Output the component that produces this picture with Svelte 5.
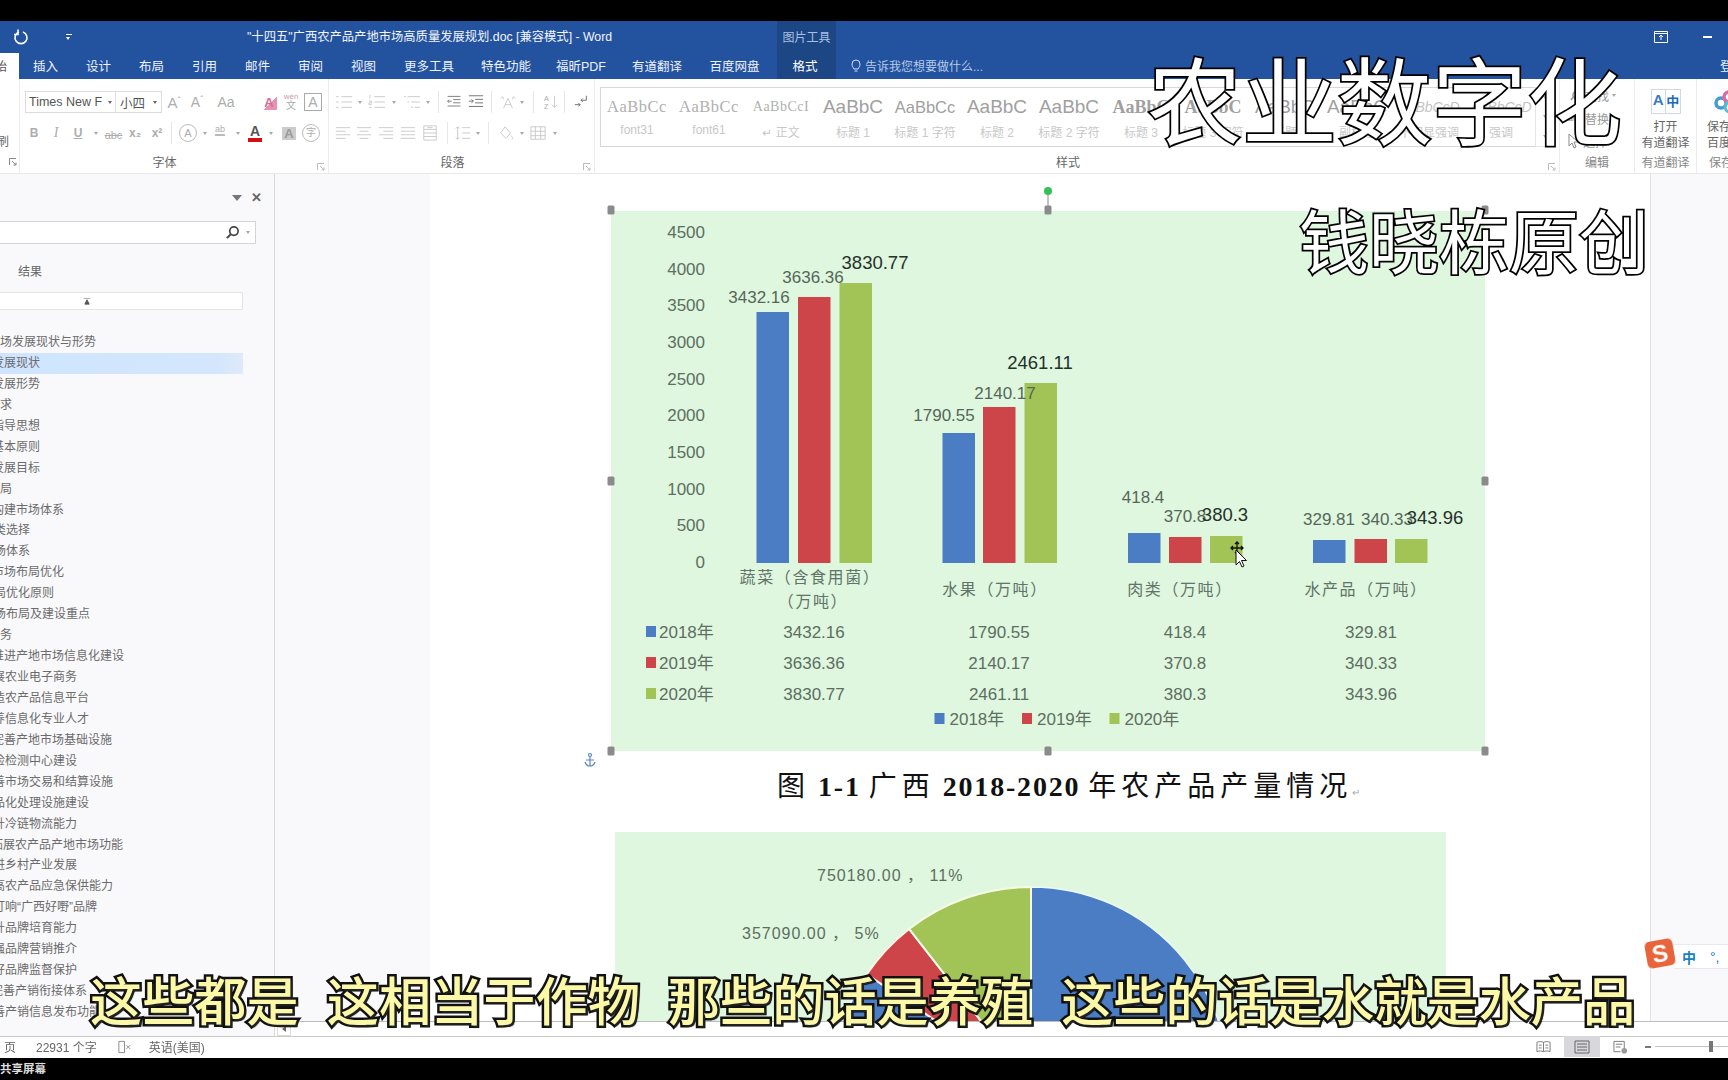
<script>
  const T = (t, w, c = '') => ({ k: 'txt', t, w, c });
  const I = (i, w, c = '') => ({ k: 'ic', i, w, c });
  const D = (w) => ({ k: 'dd', w });
  const S = (w) => ({ k: 'sep', w });
  const G = (w) => ({ k: 'gap', w });

  const ICONS = {
    bullets: 'M1 3h3M1 9h3M1 15h3M7 3h12M7 9h12M7 15h12',
    numbers: 'M2 1v4M1 8h3v2H1v2h3M1 15h3M7 3h12M7 9h12M7 15h12',
    multi: 'M1 3h2M5 3h14M5 9h2M9 9h10M9 15h2M13 15h6',
    outdent: 'M2 2h16M9 6h9M9 10h9M2 14h16M7 8H2M4 6L2 8l2 2',
    indent: 'M2 2h16M9 6h9M9 10h9M2 14h16M2 8h5M5 6l2 2-2 2',
    textdir: 'M5 16L10 5l5 11M7 12h6M2 5l2-2 1 3M18 5l-2-2-1 3',
    sort: 'M14 2v13M11 12l3 3 3-3',
    marks: 'M16 2v5H10M12 5L10 7l2 2M3 12h6M7 10l2 2-2 2',
    alignL: 'M2 3h16M2 7h11M2 11h16M2 15h11',
    alignC: 'M2 3h16M5 7h10M2 11h16M5 15h10',
    alignR: 'M2 3h16M7 7h11M2 11h16M7 15h11',
    justify: 'M2 3h16M2 7h16M2 11h16M2 15h16',
    dist: 'M3 1h14v16H3zM3 5h14M3 9h14M3 13h14M7 3h6',
    linesp: 'M4 2v14M2 4l2-2 2 2M2 14l2 2 2-2M9 3h9M9 9h9M9 15h9',
    fill: 'M9 2l6 7-5 6-6-6zM16 12c1 2 2 3 1 4',
    border: 'M2 2h16v14H2zM2 7h16M2 12h16M7 2v14M13 2v14'
  };

  const fontRow1 = [T('A', 24, 'big sup'), T('A', 22, 'mid sup'), T('Aa', 36, 'mid'), G(14), T('A', 22, 'pen'), T('wén', 22, 'wen'), T('A', 22, 'boxed')];
  const fontRow2 = [T('B', 18, 'b'), T('I', 26, 'it'), T('U', 18, 'u'), D(18), T('abc', 17, 'st'), T('x₂', 26, 'b'), T('x²', 18, 'b'), S(10), T('A', 24, 'ring'), D(10), T('ab', 20, 'abp'), D(15), T('A', 20, 'redA'), D(12), T('A', 24, 'shade'), T('字', 20, 'ring small')];
  const paraRow1 = [I('bullets', 22), D(10), I('numbers', 24), D(10), I('multi', 26), D(6), S(15), I('outdent', 16, 'dark'), I('indent', 28, 'dark'), S(2), G(6), I('textdir', 20), D(8), S(14), I('sort', 22), S(4), G(5), I('marks', 20, 'dark')];
  const paraRow2 = [I('alignL', 20), I('alignC', 22), I('alignR', 22), I('justify', 22), I('dist', 22), S(12), I('linesp', 20), D(10), S(10), I('fill', 26), D(6), I('border', 26), D(8)];

  const styles = [
    ['AaBbCc', 'font31', 'serif'], ['AaBbCc', 'font61', 'serif'], ['AaBbCcI', '↵ 正文', 'serif sm'],
    ['AaBbC', '标题 1', 'lg'], ['AaBbCc', '标题 1 字符', 'md'], ['AaBbC', '标题 2', 'lg'], ['AaBbC', '标题 2 字符', 'lg'],
    ['AaBbC', '标题 3', 'bold'], ['AaBbC', '标题 3 字符', 'bold'], ['AaBbC', '标题', 'lg'], ['AaBbC', '副标题', 'lg'],
    ['AaBbCcD', '不明显强调', 'sm it'], ['AaBbCcD', '强调', 'sm it']
  ];

  const tabs = [['插入', 53], ['设计', 53], ['布局', 53], ['引用', 53], ['邮件', 53], ['审阅', 53], ['视图', 53], ['更多工具', 78], ['特色功能', 76], ['福昕PDF', 74], ['有道翻译', 78], ['百度网盘', 77]];

  const outline = [
    ['市场发展现状与形势', 96], ['发展现状', 40, true], ['发展形势', 40], ['要求', 12], ['指导思想', 40], ['基本原则', 40], ['发展目标', 40], ['布局', 12],
    ['构建市场体系', 64], ['品类选择', 30], ['市场体系', 30], ['市场布局优化', 64], ['布局优化原则', 54], ['市场布局及建设重点', 90], ['任务', 12],
    ['推进产地市场信息化建设', 124], ['发展农业电子商务', 77], ['打造农产品信息平台', 89], ['培养信息化专业人才', 89], ['完善产地市场基础设施', 112],
    ['质检检测中心建设', 77], ['完善市场交易和结算设施', 113], ['商品化处理设施建设', 89], ['提升冷链物流能力', 77], ['拓展农产品产地市场功能', 123],
    ['促进乡村产业发展', 77], ['提高农产品应急保供能力', 113], ['打响“广西好嘢”品牌', 97], ['提升品牌培育能力', 77], ['加强品牌营销推介', 77],
    ['做好品牌监督保护', 77], ['完善产销衔接体系', 87], ['完善产销信息发布功能', 101]
  ];

  const C = { a: '#4a7dc4', b: '#cd4548', c: '#a2c355' };
  const base = 563;
  const bars = [
    [756.5, 312, C.a], [798, 297, C.b], [839.5, 283, C.c],
    [942.5, 433, C.a], [983, 407, C.b], [1024.5, 383, C.c],
    [1128, 533, C.a], [1169, 537, C.b], [1210, 536, C.c],
    [1313, 540, C.a], [1354.5, 539, C.b], [1395, 539, C.c]
  ];
  const axis = [4500, 4000, 3500, 3000, 2500, 2000, 1500, 1000, 500, 0];
  const values = [
    ['3432.16', 759, 297], ['3636.36', 813, 277], ['3830.77', 875, 263, true],
    ['1790.55', 944, 415], ['2140.17', 1005, 393], ['2461.11', 1040, 363, true],
    ['418.4', 1143, 497], ['370.8', 1185, 516], ['380.3', 1225, 515, true],
    ['329.81', 1329, 519], ['340.33', 1387, 519], ['343.96', 1435, 518, true]
  ];
  const cats = [['蔬菜（含食用菌）', 810, 577], ['（万吨）', 813, 601], ['水果（万吨）', 995, 589], ['肉类（万吨）', 1180, 589], ['水产品（万吨）', 1366, 589]];
  const table = [
    ['2018年', 632, C.a, ['3432.16', '1790.55', '418.4', '329.81']],
    ['2019年', 663, C.b, ['3636.36', '2140.17', '370.8', '340.33']],
    ['2020年', 694, C.c, ['3830.77', '2461.11', '380.3', '343.96']]
  ];
  const cols = [814, 999, 1185, 1371];
  const legend = [[934.5, '2018年', C.a], [1022, '2019年', C.b], [1109.5, '2020年', C.c]];
  const handles = [[611, 210], [1048, 210], [1485, 210], [611, 481], [1485, 481], [611, 751], [1048, 751], [1485, 751]];

  function wedge(cx, cy, r, a0, a1) {
    const p = (a) => [cx + r * Math.sin((a * Math.PI) / 180), cy - r * Math.cos((a * Math.PI) / 180)];
    const [x0, y0] = p(a0), [x1, y1] = p(a1);
    const large = a1 - a0 > 180 ? 1 : 0;
    return `M${cx} ${cy}L${x0} ${y0}A${r} ${r} 0 ${large} 1 ${x1} ${y1}Z`;
  }
  const sub = ['这些都是', '这相当于作物', '那些的话是养殖', '这些的话是水就是水产品'];
</script>

{#snippet tools(list)}
  {#each list as t}
    <span class="slot" style:width="{t.w}px">
      {#if t.k === 'txt'}
        <span class={'tx ' + t.c}>{t.t}</span>
      {:else if t.k === 'ic'}
        <svg class={'ic ' + t.c} viewBox="0 0 20 18" width="18" height="16">
          <path d={ICONS[t.i]} />
          {#if t.i === 'sort'}
            <text x="2" y="8" class="mini">A</text>
            <text x="2" y="17" class="mini">Z</text>
          {/if}
        </svg>
      {:else if t.k === 'dd'}
        <span class="caret"></span>
      {:else if t.k === 'sep'}
        <span class="vsep"></span>
      {/if}
    </span>
  {/each}
{/snippet}

{#snippet launcher()}
  <svg class="launch" viewBox="0 0 8 8" width="8" height="8"><path d="M0.5 7V0.5H7M3 3l4 4M7 4.5V7H4.5" /></svg>
{/snippet}

<div class="screen">
  <div class="soft">
    <div class="black top"></div>

    <header class="title">
      <div class="qat">
        <svg viewBox="0 0 16 16" width="16" height="17"><path d="M6 2.500a6 6 0 1 0 4 0M5 0v5H1" fill="none" stroke="#fff" stroke-width="1.600" /></svg>
      </div>
      <div class="qat2"><span class="qbar"></span><span class="caret white"></span></div>
      <div class="doc-title">"十四五"广西农产品产地市场高质量发展规划.doc [兼容模式] - Word</div>
      <div class="ctx">图片工具</div>
      <div class="grow"></div>
      <svg class="restore" viewBox="0 0 14 12" width="14" height="12"><path d="M0.500 0.500h13v11H.5zM.5 2.500h13M7 9V4M5 6l2-2 2 2" fill="none" stroke="#fff" /></svg>
      <div class="minimize"></div>
    </header>

    <nav class="tabs">
      <div class="tab-home">始</div>
      {#each tabs as [label, w]}
        <div class="tab" style:width="{w}px">{label}</div>
      {/each}
      <div class="tab ctx-tab">格式</div>
      <svg class="bulb" viewBox="0 0 10 14" width="10" height="14"><path d="M3 10C2 8 1 7.500 1 5a4 4 0 0 1 8 0c0 2.500-1 3-2 5zM3.500 12h3" fill="none" stroke="#cfe0ff" /></svg>
      <div class="tell">告诉我您想要做什么...</div>
      <div class="grow"></div>
      <div class="login">登</div>
    </nav>

    <section class="ribbon">
      <div class="grp clip">
        <div class="clip-txt">刷</div>
        <div class="grp-foot">{@render launcher()}</div>
      </div>
      <div class="grp font">
        <div class="row first">
          <div class="combo">
            <span class="cb-a">Times New F<span class="caret"></span></span>
            <span class="cb-b">小四<span class="caret"></span></span>
          </div>
          {@render tools(fontRow1)}
        </div>
        <div class="row">{@render tools(fontRow2)}</div>
        <div class="grp-label">字体{@render launcher()}</div>
      </div>
      <div class="grp para">
        <div class="row first">{@render tools(paraRow1)}</div>
        <div class="row">{@render tools(paraRow2)}</div>
        <div class="grp-label">段落{@render launcher()}</div>
      </div>
      <div class="grp style">
        <div class="gal-wrap">
          <div class="gallery">
            {#each styles as [sample, name, cls]}
              <div class="st">
                <div class={'st-s ' + cls}>{sample}</div>
                <div class="st-n">{name}</div>
              </div>
            {/each}
          </div>
          <div class="gal-arrows">
            <span class="caret"></span><span class="caret"></span><span class="caret"></span>
          </div>
        </div>
        <div class="grp-label">样式{@render launcher()}</div>
      </div>
      <div class="grp edit">
        <div class="edit-list">
          <div class="e-row">
            <svg viewBox="0 0 14 14" width="14" height="14"><path d="M9 3a4 4 0 1 0 0.010 0M3 12l3-4" fill="none" stroke="#999" stroke-width="1.500" /></svg>
            <span>查找</span><span class="caret"></span>
          </div>
          <div class="e-row"><span class="e-ic">ac</span><span>替换</span></div>
          <div class="e-row">
            <svg viewBox="0 0 12 16" width="12" height="16"><path d="M1 1v12l3-3 2 5 2-1-2-5h4z" fill="#fff" stroke="#888" /></svg>
            <span>选择</span>
          </div>
        </div>
        <div class="grp-label plain">编辑</div>
      </div>
      <div class="grp yd">
        <div class="yd-ic">
          <span class="yd-a">A</span><span class="yd-z">中</span>
        </div>
        <div class="big-l">打开<br />有道翻译</div>
        <div class="grp-label plain">有道翻译</div>
      </div>
      <div class="grp bd">
        <svg class="bd-ic" viewBox="0 0 30 26" width="30" height="26">
          <circle cx="8" cy="15" r="5" fill="none" stroke="#3f9ed8" stroke-width="3.500" />
          <circle cx="16" cy="9" r="5" fill="none" stroke="#e26a9e" stroke-width="3.500" />
          <circle cx="17" cy="19" r="5" fill="none" stroke="#5fb9c9" stroke-width="3" />
        </svg>
        <div class="big-l left">保存<br />百度</div>
        <div class="grp-label plain left">保存</div>
      </div>
    </section>

    <div class="main">
      <aside class="pane">
        <div class="pane-head"><span class="caret dark"></span><span class="close">✕</span></div>
        <div class="search">
          <svg viewBox="0 0 16 16" width="15" height="15"><circle cx="9.500" cy="6.500" r="4.500" fill="none" stroke="#444" stroke-width="1.800" /><path d="M6 10l-4 4" stroke="#444" stroke-width="2.200" /></svg>
          <span class="caret"></span>
        </div>
        <div class="result">结果</div>
        <div class="upbox"><svg viewBox="0 0 8 8" width="8" height="7"><path d="M0 0h8M4 2L1.500 7h5z" stroke="#555" fill="#555" /></svg></div>
        <ul class="outline">
          {#each outline as [text, end, sel]}
            <li class:sel><span style:width="{end}px">{text}</span></li>
          {/each}
        </ul>
      </aside>

      <div class="work">
        <div class="docrow">
          <div class="gutter"></div>
          <div class="page">
            <svg class="chart" viewBox="611 211 874 540" width="874" height="540">
              <rect x="611" y="211" width="874" height="540" fill="#dff7de" />
              {#each axis as v, i}
                <text class="lab" x="705" y={232 + i * 36.67 + 6} text-anchor="end">{v}</text>
              {/each}
              {#each bars as [x, top, fill]}
                <rect {x} y={top} width="32.500" height={base - top} {fill} />
              {/each}
              {#each values as [t, x, y, strong]}
                <text class={strong ? 'val strong' : 'val'} {x} y={y + 6} text-anchor="middle">{t}</text>
              {/each}
              {#each cats as [t, x, y]}
                <text class="cat" {x} y={y + 6} text-anchor="middle">{t}</text>
              {/each}
              {#each table as [name, y, color, vals]}
                <rect x="646" y={y - 6} width="10" height="11" fill={color} />
                <text class="lab" x="659" y={y + 6}>{name}</text>
                {#each vals as v, i}
                  <text class="lab" x={cols[i]} y={y + 6} text-anchor="middle">{v}</text>
                {/each}
              {/each}
              {#each legend as [x, t, color]}
                <rect {x} y="713" width="10" height="11" fill={color} />
                <text class="lab" x={x + 15} y="725">{t}</text>
              {/each}
              <path d="M1048 191V210" stroke="#888" />
              <circle cx="1048" cy="191" r="4" fill="#35c15a" />
              {#each handles as [x, y]}
                <rect x={x - 3.500} y={y - 4.500} width="7" height="9" rx="1.500" fill="#8b8b8b" />
              {/each}
              <g fill="none" stroke="#5b86c0" stroke-width="1.200">
                <circle cx="590" cy="755" r="1.500" />
                <path d="M590 757v9M586 760h8M585 762c1 3 3 4 5 4s4-1 5-4" />
              </g>
              <g transform="translate(1232 546)">
                <path d="M5 -4v12M-1 2h12M3 -2l2-2 2 2M3 6l2 2 2-2M1 0l-2 2 2 2M9 0l2 2-2 2" fill="none" stroke="#111" stroke-width="1.300" />
                <path d="M4 4v15l3.500-3.500 2.500 5.500 2-1-2.500-5.500h5z" fill="#fff" stroke="#111" />
              </g>
            </svg>

            <div class="caption">
              <span class="cj">图</span><span class="lt">1-1</span><span class="cj">广西</span><span class="lt">2018-2020</span><span class="cj">年农产品产量情况</span><span class="ret">↵</span>
            </div>

            <svg class="chart2" viewBox="615 832 831 189" width="831" height="189">
              <rect x="615" y="832" width="831" height="189" fill="#dff7de" />
              <text class="pie" x="817" y="881">750180.00 ， 11%</text>
              <text class="pie" x="742" y="939">357090.00 ， 5%</text>
              <path d={wedge(1031, 1085, 198, 0, 304)} fill="#4a7dc4" stroke="#eef8ff" stroke-width="1.500" />
              <path d={wedge(1031, 1085, 198, 304, 322)} fill="#cd4548" stroke="#fff3ea" stroke-width="2" />
              <path d={wedge(1031, 1085, 198, 322, 360)} fill="#a2c355" stroke="#f8fbe8" stroke-width="2" />
            </svg>
          </div>
          <div class="gutter right"></div>
        </div>
        <div class="hscroll"><span class="sbtn"><span class="tri"></span></span></div>
      </div>
    </div>

    <footer class="status">
      <span class="s-pg">页</span>
      <span class="s-count">22931 个字</span>
      <svg class="s-ic" viewBox="0 0 16 14" width="15" height="14"><path d="M8 1H2v12h6M8 1v12M10 5l4 4M14 5l-4 4" fill="none" stroke="#888" /></svg>
      <span class="s-lang">英语(美国)</span>
      <span class="grow"></span>
      <svg class="v-a" viewBox="0 0 16 14" width="15" height="14"><path d="M8 2C6 1 3 1 1 2v10c2-1 5-1 7 0 2-1 5-1 7 0V2c-2-1-5-1-7 0zM8 2v10M3 5h3M3 8h3M10 5h3M10 8h3" fill="none" stroke="#777" /></svg>
      <span class="v-on"><svg viewBox="0 0 16 14" width="16" height="14"><path d="M1 1h14v12H1zM3 4h10M3 7h10M3 10h10" fill="none" stroke="#666" /></svg></span>
      <svg class="v-c" viewBox="0 0 16 14" width="15" height="14"><path d="M1 1h11v8M1 1v11h7M3 4h7M3 7h5" fill="none" stroke="#777" /><circle cx="12" cy="11" r="3" fill="#999" /></svg>
      <span class="z-minus"></span>
      <span class="z-track"><span class="z-thumb"></span></span>
    </footer>

    <div class="black share">共享屏幕</div>
  </div>

  <div class="wm wm1">农业数字化</div>
  <div class="wm wm2">钱晓栋原创</div>
  <div class="subtitle">
    {#each sub as s}<span>{s}</span>{/each}
  </div>
  <div class="ime">
    <span class="ime-s">S</span>
    <span class="ime-bar"><b>中</b><i>°,</i></span>
  </div>
</div>

<style>
  :global(body) { margin: 0; background: #000; }
  .screen {
    position: relative; width: 1728px; height: 1080px; overflow: hidden;
    font-family: "Liberation Sans", "Noto Sans CJK SC", sans-serif; color: #666;
  }
  .soft { width: 1728px; height: 1080px; display: flex; flex-direction: column; filter: blur(0.35px); }
  .grow { flex: 1; }
  .black { background: #000; }
  .top { height: 21px; flex: none; }

  .title { height: 32px; flex: none; background: #23529e; display: flex; align-items: center; color: #fff; }
  .qat { width: 42px; padding-left: 13px; box-sizing: border-box; display: flex; }
  .qat2 { width: 205px; padding-left: 24px; box-sizing: border-box; display: flex; flex-direction: column; gap: 2px; }
  .qbar { width: 6px; height: 1px; background: #fff; }
  .doc-title { width: 530px; font-size: 12.300px; color: #f2f5fb; white-space: nowrap; padding-bottom: 2px; box-sizing: border-box; }
  .ctx { width: 59px; height: 32px; background: #1d4685; font-size: 12px; color: #a9c0e4; display: flex; align-items: center; justify-content: center; padding-bottom: 2px; box-sizing: border-box; }
  .restore { margin-right: 35px; }
  .minimize { width: 9px; height: 2px; background: #fff; margin-right: 16px; }

  .tabs { height: 26px; flex: none; background: #23529e; display: flex; align-items: center; color: #eef3fb; font-size: 12.500px; }
  .tab-home { width: 19px; height: 26px; background: #fff; color: #555; display: flex; align-items: center; justify-content: flex-end; overflow: hidden; padding: 0 12px 2px 0; box-sizing: border-box; white-space: nowrap; }
  .tab { height: 26px; display: flex; align-items: center; justify-content: center; white-space: nowrap; padding-bottom: 2px; box-sizing: border-box; }
  .ctx-tab { width: 59px; margin-left: 4px; padding-right: 3px; background: #1d4685; color: #fff; }
  .bulb { margin-left: 15px; margin-right: 4px; }
  .tell { font-size: 12px; color: #b6cbe9; padding-bottom: 2px; }
  .login { width: 8px; overflow: hidden; white-space: nowrap; font-size: 12.500px; padding-bottom: 2px; }

  .ribbon { height: 95px; flex: none; background: #fff; border-bottom: 1px solid #e9e9e9; display: flex; box-sizing: border-box; color: #aaa; overflow: hidden; }
  .grp { position: relative; box-sizing: border-box; border-right: 1px solid #ececec; height: 94px; display: flex; flex-direction: column; }
  .clip { width: 20px; padding-top: 53px; align-items: flex-start; }
  .clip-txt { font-size: 12px; color: #666; width: 9px; overflow: hidden; white-space: nowrap; display: flex; justify-content: flex-end; }
  .grp-foot { margin-top: auto; align-self: flex-end; padding-right: 2px; padding-bottom: 3px; }
  .font { width: 309px; padding-left: 5px; }
  .para { width: 266px; padding-left: 4px; }
  .row { display: flex; align-items: center; height: 22px; margin-top: 9px; flex: none; }
  .row.first { margin-top: 12px; }
  .grp-label { margin-top: auto; height: 20px; line-height: 20px; font-size: 12px; color: #666; text-align: center; position: relative; box-sizing: border-box; }
  .font .grp-label { padding-right: 24px; }
  .para .grp-label { padding-right: 22px; }
  .style .grp-label { padding-right: 18px; }
  .launch { position: absolute; right: 3px; bottom: 2px; fill: none; stroke: #bbb; }
  .clip .launch { position: static; stroke: #888; }

  .combo { display: flex; height: 22px; width: 137px; border: 1px solid #dcdcdc; box-sizing: border-box; flex: none; font-size: 12.500px; color: #555; }
  .cb-a { width: 90px; display: flex; align-items: center; justify-content: space-between; padding: 0 3px; box-sizing: border-box; border-right: 1px solid #dcdcdc; white-space: nowrap; overflow: hidden; }
  .cb-b { flex: 1; display: flex; align-items: center; justify-content: space-between; padding: 0 4px 0 4px; box-sizing: border-box; }

  .slot { display: flex; align-items: center; justify-content: center; height: 22px; flex: none; }
  .tx { font-size: 13px; line-height: 1; color: #adadad; white-space: nowrap; display: block; }
  .tx.big { font-size: 15px; }
  .tx.mid { font-size: 14px; }
  .tx.sup::after { content: "ˆ"; font-size: 9px; vertical-align: 5px; }
  .tx.pen { color: #d56d92; font-weight: 700; font-size: 13px; background: linear-gradient(135deg, transparent 55%, #e493b0 55%); padding: 1px 3px; }
  .tx.wen { font-size: 8px; color: #c9a0a0; text-align: center; }
  .tx.wen::after { content: "文"; display: block; font-size: 10px; color: #aaa; }
  .tx.boxed { border: 1px solid #aaa; padding: 1px 3px; font-size: 14px; }
  .tx.b { font-weight: 700; font-size: 12px; }
  .tx.it { font-style: italic; font-family: "Liberation Serif", serif; font-size: 14px; }
  .tx.u { text-decoration: underline; font-weight: 700; font-size: 12px; }
  .tx.st { text-decoration: line-through; font-size: 11px; }
  .tx.ring { border: 1px solid #bbb; border-radius: 50%; width: 16px; height: 16px; text-align: center; line-height: 16px; font-size: 11px; }
  .tx.small { font-size: 10px; }
  .tx.abp { font-size: 9px; transform: translateY(-3px); border-bottom: 2px solid #bbb; }
  .tx.redA { font-size: 14px; font-weight: 700; color: #555; border-bottom: 4px solid #d40f14; padding: 0 2px; line-height: 13px; }
  .tx.shade { background: #ccc; color: #999; padding: 0 2px; font-weight: 700; }
  .ic { fill: none; stroke: #c6c6c6; stroke-width: 1; }
  .ic.dark { stroke: #666; }
  .mini { font-size: 8px; fill: #aaa; stroke: none; }
  .vsep { width: 1px; height: 22px; background: #e7e7e7; display: block; }
  .caret { display: inline-block; width: 0; height: 0; border-left: 2.500px solid transparent; border-right: 2.500px solid transparent; border-top: 3px solid #a8a8a8; flex: none; }
  .caret.white { border-top-color: #fff; }
  .caret.dark { border-left-width: 5px; border-right-width: 5px; border-top: 6px solid #777; }
  .cb-a .caret, .cb-b .caret { border-top-color: #666; }

  .style { width: 965px; }
  .gal-wrap { display: flex; height: 60px; margin: 8px 0 0 5px; flex: none; }
  .gallery { width: 935px; border: 1px solid #d8d8d8; border-right: none; box-sizing: border-box; display: flex; overflow: hidden; }
  .st { width: 72px; flex: none; overflow: hidden; text-align: center; padding-top: 5px; box-sizing: border-box; }
  .st-s { height: 31px; line-height: 28px; font-size: 18px; color: #a0a0a0; white-space: nowrap; overflow: hidden; padding: 0 3px; }
  .st-s.serif { font-family: "Liberation Serif", serif; font-size: 16.500px; letter-spacing: 0.5px; color: #b0b0b0; }
  .st-s.sm { font-size: 14px; }
  .st-s.md { font-size: 16.500px; }
  .st-s.lg { font-size: 19px; }
  .st-s.bold { font-weight: 700; font-family: "Liberation Serif", serif; }
  .st-s.it { color: #c4c4c4; font-style: italic; }
  .st-n { font-size: 12px; color: #c8c8c8; white-space: nowrap; margin-top: -1px; }
  .gal-arrows { width: 20px; border: 1px solid #e4e4e4; box-sizing: border-box; display: flex; flex-direction: column; justify-content: space-around; align-items: center; }

  .edit { width: 75px; padding: 6px 0 0 8px; }
  .edit-list { display: flex; flex-direction: column; gap: 3px; }
  .e-row { height: 20px; display: flex; align-items: center; gap: 3px; font-size: 12px; color: #999; }
  .e-ic { font-size: 9px; color: #888; width: 14px; }
  .grp-label.plain { color: #888; }
  .grp-label.left { text-align: left; width: 100%; padding-left: 12px; white-space: nowrap; }
  .edit .grp-label { margin-left: -8px; }

  .yd { width: 62px; align-items: center; }
  .yd-ic { display: flex; margin-top: 10px; height: 25px; width: 30px; flex: none; border: 1px solid #cfd8e3; box-sizing: border-box; color: #3a7ac8; font-weight: 700; }
  .yd-a { width: 15px; text-align: center; font-size: 15px; line-height: 20px; }
  .yd-z { width: 15px; text-align: center; font-size: 13px; line-height: 24px; border-left: 1px solid #cfd8e3; color: #1e6bb8; }
  .big-l { margin-top: 5px; font-size: 12px; line-height: 16px; color: #666; text-align: center; white-space: nowrap; }
  .big-l.left { text-align: left; padding-left: 10px; }
  .bd { width: 31px; border-right: none; overflow: hidden; }
  .bd-ic { margin: 9px 0 0 16px; flex: none; }

  .main { height: 862px; flex: none; display: flex; background: #fff; }
  .pane { width: 275px; flex: none; box-sizing: border-box; border-right: 1px solid #d9d9d9; background: #f9f9fb; overflow: hidden; display: flex; flex-direction: column; }
  .pane-head { height: 47px; flex: none; display: flex; align-items: center; justify-content: flex-end; gap: 9px; padding-right: 10px; box-sizing: border-box; }
  .close { font-size: 13px; color: #666; font-weight: 700; width: 13px; }
  .search { width: 256px; height: 23px; flex: none; background: #fff; border: 1px solid #d4d4d4; border-left: none; box-sizing: border-box; display: flex; align-items: center; justify-content: flex-end; gap: 6px; padding-right: 5px; }
  .result { height: 22px; margin-top: 17px; flex: none; padding-left: 18px; font-size: 12px; line-height: 22px; color: #666; }
  .upbox { width: 243px; height: 18px; margin-top: 9px; flex: none; background: #fff; border: 1px solid #e4e4e4; border-left: none; box-sizing: border-box; display: flex; align-items: center; justify-content: flex-end; padding-right: 151px; }
  .outline { list-style: none; margin: 22px 0 0; padding: 0; width: 243px; }
  .outline li { height: 20.940px; line-height: 20.940px; font-size: 12px; color: #6b6b6b; white-space: nowrap; }
  .outline li.sel { background: linear-gradient(90deg, #cfe5ff, #d3e6fd 90%, #dfeafa); }
  .outline li span { display: flex; justify-content: flex-end; }

  .work { flex: 1; min-width: 0; display: flex; flex-direction: column; }
  .docrow { height: 847px; flex: none; display: flex; overflow: hidden; }
  .gutter { width: 155px; flex: none; background: #f9f8fb; }
  .gutter.right { width: 78px; border-left: 1px solid #e2e2e2; box-sizing: border-box; }
  .page { width: 1220px; flex: none; background: #fff; padding: 37px 0 0 181px; box-sizing: border-box; overflow: hidden; }
  .chart { display: block; overflow: visible; }
  .chart2 { display: block; margin-left: 4px; }
  .lab { font-size: 17px; fill: #5d6e62; }
  .val { font-size: 17px; fill: #56665b; }
  .val.strong { font-size: 18.500px; fill: #25302a; }
  .cat { font-size: 16px; fill: #62736a; letter-spacing: 1.600px; }
  .pie { font-size: 16px; fill: #5d6e62; letter-spacing: 1px; }

  .caption { height: 81px; box-sizing: border-box; padding: 19px 0 28px 166px; display: flex; align-items: center; gap: 8px; color: #111; font-size: 28px; line-height: 34px; }
  .caption .cj { font-family: "Liberation Serif", "Noto Sans CJK SC", serif; letter-spacing: 5px; }
  .caption .lt { font-family: "Liberation Serif", serif; font-weight: 700; letter-spacing: 1.800px; }
  .caption .ret { font-size: 10px; color: #aaa; margin-left: -8px; margin-top: 12px; }

  .hscroll { height: 15px; flex: none; background: #fff; border-top: 1px solid #bdbdbd; box-sizing: border-box; padding-left: 2px; }
  .sbtn { display: flex; align-items: center; justify-content: center; width: 14px; height: 14px; border: 1px solid #ddd; box-sizing: border-box; }
  .tri { width: 0; height: 0; border-top: 3.500px solid transparent; border-bottom: 3.500px solid transparent; border-right: 4px solid #666; }

  .status { height: 22px; flex: none; background: #fff; border-top: 1px solid #c9c9c9; box-sizing: border-box; display: flex; align-items: center; font-size: 12px; color: #666; padding-bottom: 2px; }
  .s-pg { margin-left: 4px; }
  .s-count { margin-left: 20px; }
  .s-ic { margin-left: 20px; }
  .s-lang { margin-left: 17px; }
  .v-on { width: 36px; height: 21px; background: #d8d8dc; margin-left: 13px; display: flex; align-items: center; justify-content: center; }
  .v-c { margin-left: 13px; }
  .z-minus { width: 6px; height: 2px; background: #777; margin-left: 17px; }
  .z-track { position: relative; width: 73px; height: 1px; background: #c4c4c4; margin-left: 4px; }
  .z-thumb { position: absolute; left: 54px; top: -5px; width: 4px; height: 11px; background: #777; }

  .share { height: 22px; flex: none; font-size: 11.500px; font-weight: 700; line-height: 22px; color: #ddd; }

  .wm { position: absolute; font-family: "Noto Sans CJK SC", sans-serif; color: #fff; -webkit-text-stroke: 3.500px #000; paint-order: stroke fill; white-space: nowrap; line-height: 1; font-weight: 400; }
  .wm1 { left: 1147px; top: 49px; font-size: 95px; }
  .wm2 { left: 1299px; top: 204px; font-size: 70px; }
  .subtitle { position: absolute; left: 90px; top: 969px; display: flex; gap: 28px; font-family: "Noto Sans CJK SC", sans-serif; font-size: 52.200px; line-height: 58px; font-weight: 500; color: #fbf9a8; -webkit-text-stroke: 5px #111; paint-order: stroke fill; white-space: nowrap; text-shadow: 2px 2px 1px #222; }

  .ime { position: absolute; left: 1646px; top: 938px; display: flex; align-items: center; }
  .ime-s { width: 28px; height: 27px; background: #e8643a; border-radius: 5px; transform: rotate(-10deg); color: #fff; font-weight: 700; font-size: 24px; line-height: 27px; text-align: center; position: relative; z-index: 1; }
  .ime-bar { width: 54px; height: 25px; background: #fff; border-top: 1px solid #e8e8ee; border-bottom: 1px solid #e8e8ee; box-sizing: border-box; margin-top: 6px; display: flex; align-items: center; gap: 14px; padding-left: 8px; color: #1a7fc0; font-size: 14px; }
  .ime-bar b { font-weight: 700; }
  .ime-bar i { font-style: normal; }
</style>
